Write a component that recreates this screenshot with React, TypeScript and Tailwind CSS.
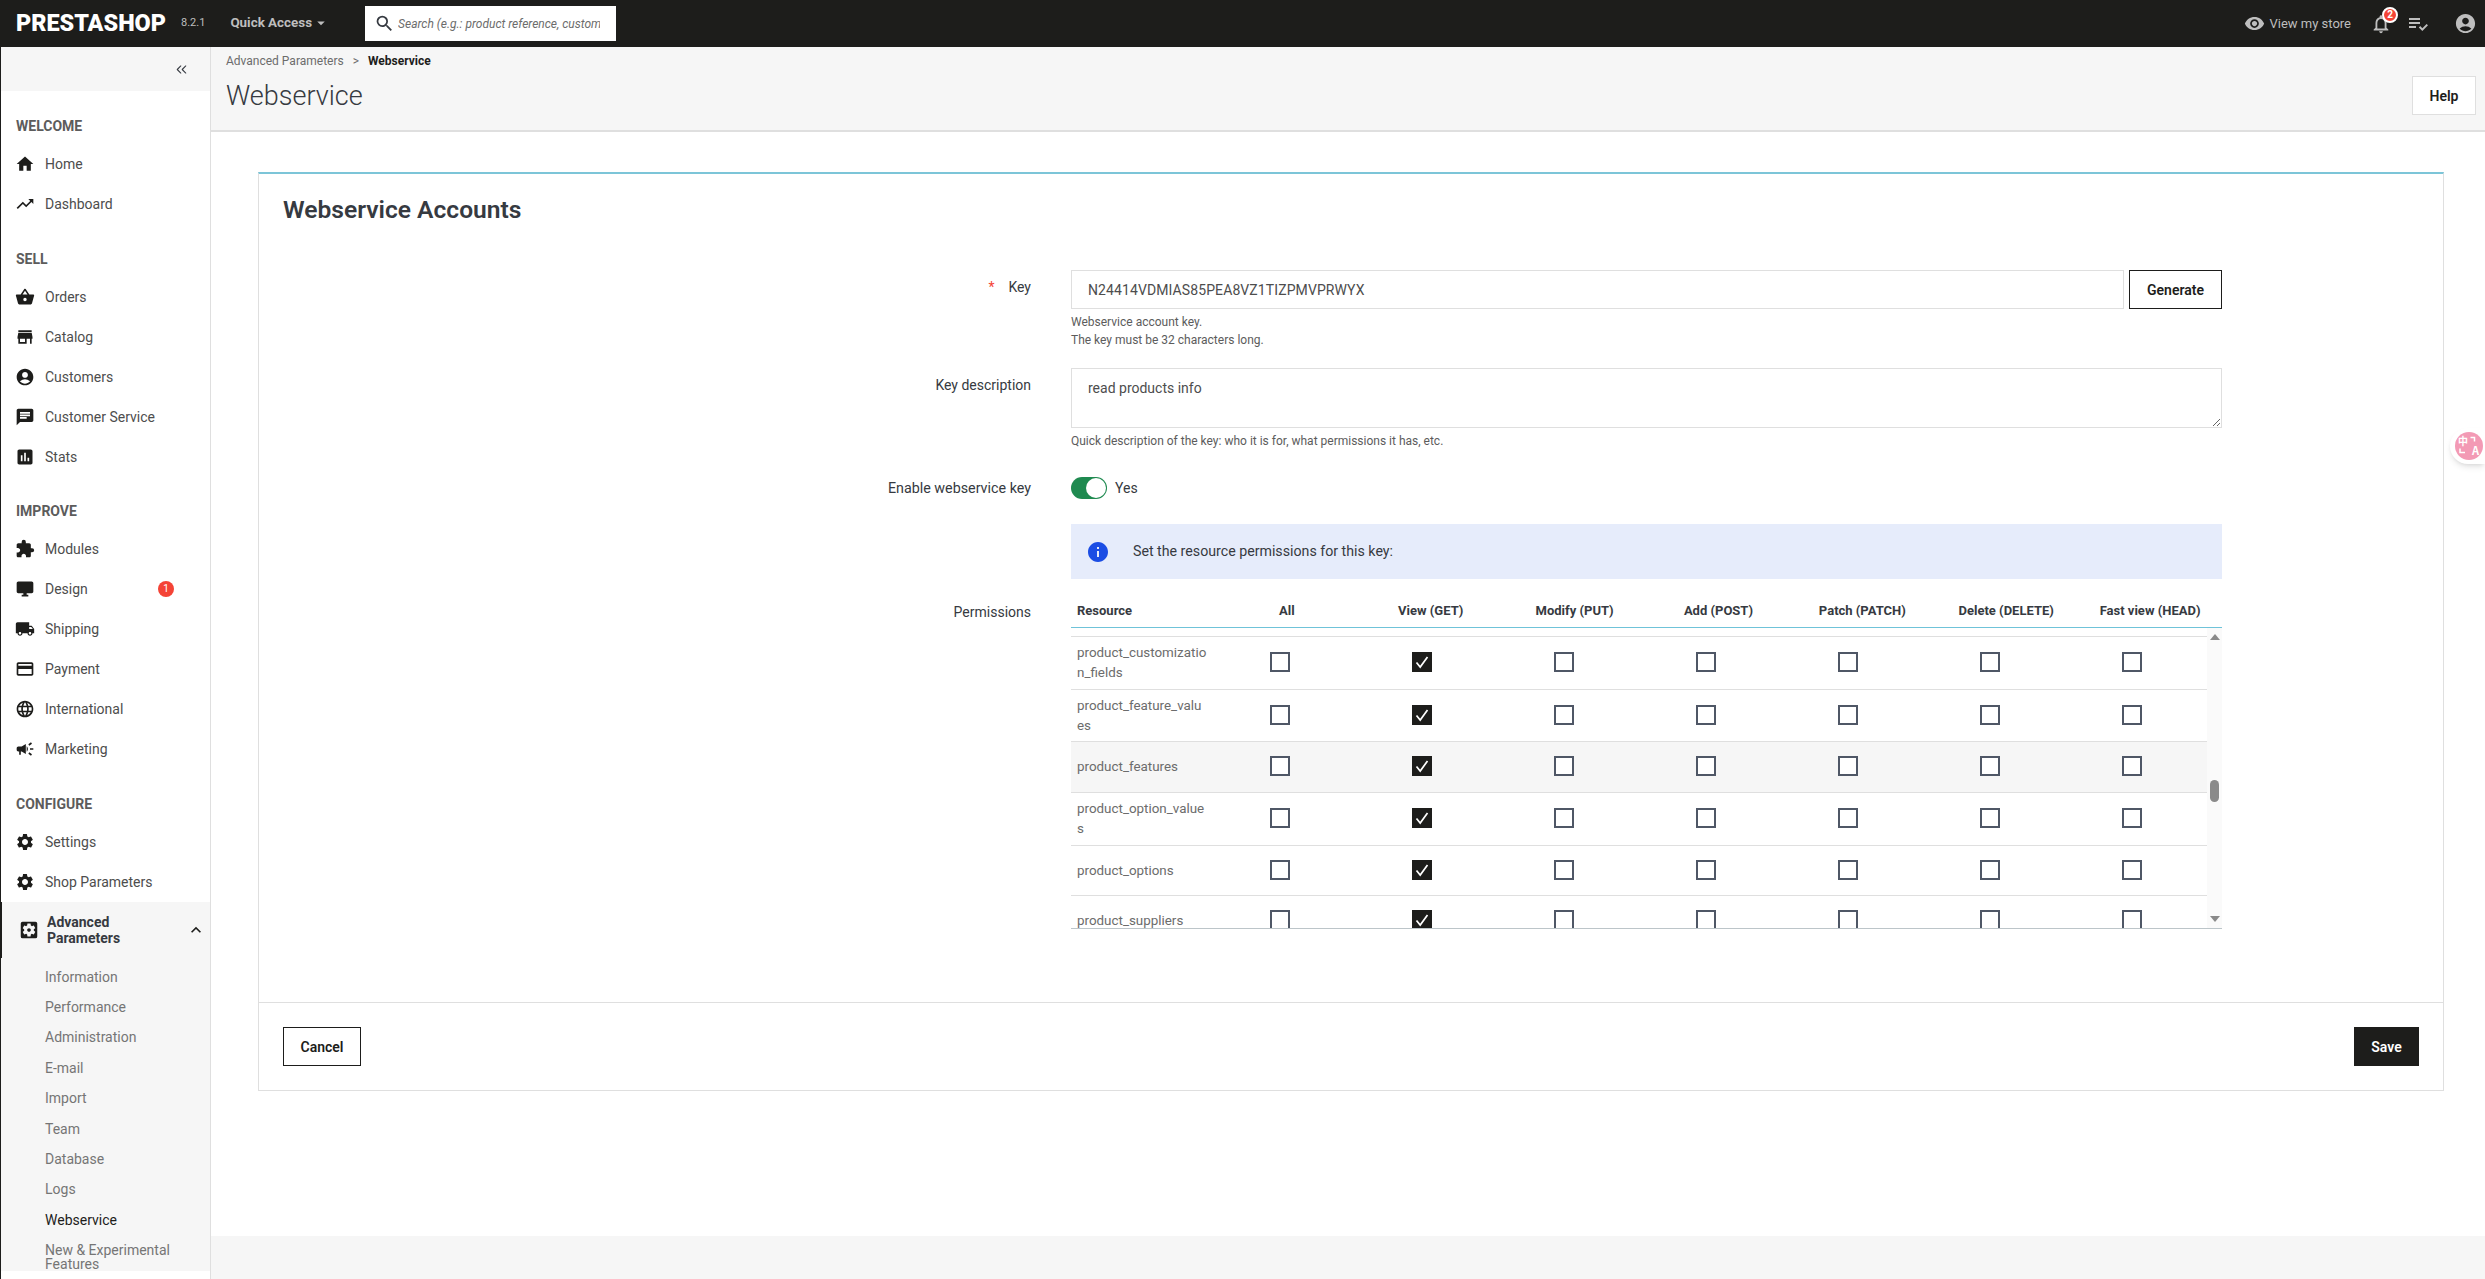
import {
  MdAccountCircle,
  MdArrowDropDown,
  MdAssessment,
  MdCampaign,
  MdChat,
  MdCreditCard,
  MdDesktopWindows,
  MdExtension,
  MdHome,
  MdInfo,
  MdKeyboardArrowUp,
  MdLanguage,
  MdLocalShipping,
  MdNotificationsNone,
  MdOutlinePlaylistAddCheck,
  MdSearch,
  MdSettings,
  MdSettingsApplications,
  MdShoppingBasket,
  MdStore,
  MdTrendingUp,
  MdVisibility,
} from "react-icons/md";
import { ChevronsLeft } from "lucide-react";
import type { IconType } from "react-icons";

type NavItem = { label: string; icon: IconType; badge?: string };

const navSections: { title: string; items: NavItem[] }[] = [
  {
    title: "Welcome",
    items: [
      { label: "Home", icon: MdHome },
      { label: "Dashboard", icon: MdTrendingUp },
    ],
  },
  {
    title: "Sell",
    items: [
      { label: "Orders", icon: MdShoppingBasket },
      { label: "Catalog", icon: MdStore },
      { label: "Customers", icon: MdAccountCircle },
      { label: "Customer Service", icon: MdChat },
      { label: "Stats", icon: MdAssessment },
    ],
  },
  {
    title: "Improve",
    items: [
      { label: "Modules", icon: MdExtension },
      { label: "Design", icon: MdDesktopWindows, badge: "1" },
      { label: "Shipping", icon: MdLocalShipping },
      { label: "Payment", icon: MdCreditCard },
      { label: "International", icon: MdLanguage },
      { label: "Marketing", icon: MdCampaign },
    ],
  },
  {
    title: "Configure",
    items: [
      { label: "Settings", icon: MdSettings },
      { label: "Shop Parameters", icon: MdSettings },
    ],
  },
];

const subLinks = [
  "Information",
  "Performance",
  "Administration",
  "E-mail",
  "Import",
  "Team",
  "Database",
  "Logs",
];

const columns = [
  "All",
  "View (GET)",
  "Modify (PUT)",
  "Add (POST)",
  "Patch (PATCH)",
  "Delete (DELETE)",
  "Fast view (HEAD)",
];

const resources = [
  { name: "product_customizatio\nn_fields", row: "h-[53px]" },
  { name: "product_feature_valu\nes", row: "h-[52px]" },
  { name: "product_features", row: "h-[51px] bg-[#f6f6f6]" },
  { name: "product_option_value\ns", row: "h-[53px]" },
  { name: "product_options", row: "h-[50px]" },
  { name: "product_suppliers", row: "h-[50px]" },
];

function Checkbox({ checked }: { checked?: boolean }) {
  if (checked) {
    return (
      <span className="flex h-5 w-5 items-center justify-center bg-[#1d1d1b]">
        <svg viewBox="0 0 20 20" className="h-5 w-5" fill="none" stroke="#fff" strokeWidth="1.7">
          <path d="M4.5 10.5 8.2 15 15.5 5" />
        </svg>
      </span>
    );
  }
  return <span className="block h-5 w-5 border-2 border-[#4f5766] bg-white" />;
}

function Sidebar() {
  return (
    <aside className="w-[211px] shrink-0 overflow-hidden border-r border-r-[#dfdfdf] border-l border-l-[#1d1d1b] bg-white text-sm text-[#4d4d4d]">
      <div className="flex h-[44px] items-center justify-end bg-[#f6f6f6] pr-[20px] text-[#363a41]">
        <ChevronsLeft size={17} strokeWidth={1.5} />
      </div>
      <nav>
        {navSections.map((section) => (
          <div key={section.title} className="pt-[24.75px]">
            <div className="mb-2 h-5 pl-[15px] font-bold uppercase leading-5 text-[#5c5c5c]">
              {section.title}
            </div>
            {section.items.map((item) => (
              <a key={item.label} className="flex h-10 items-center pl-[14px]">
                <item.icon className="mr-[10px] shrink-0 text-[20px] text-[#1d1d1b]" />
                <span>{item.label}</span>
                {item.badge && (
                  <span className="ml-auto mr-[36px] flex h-4 w-4 items-center justify-center rounded-full bg-[#f44336] text-[10px] text-white">
                    {item.badge}
                  </span>
                )}
              </a>
            ))}
          </div>
        ))}
      </nav>
      <div className="-ml-px bg-[#f6f6f6]">
        <div className="flex h-[56px] items-center border-l-2 border-l-[#1d1d1b] pl-[16px] pr-[4px]">
          <MdSettingsApplications className="mr-[7px] shrink-0 text-[22px] text-[#1d1d1b]" />
          <span className="flex-1 font-bold leading-4 text-[#363a41]">
            Advanced
            <br />
            Parameters
          </span>
          <MdKeyboardArrowUp className="text-[20px] text-[#1d1d1b]" />
        </div>
        <div className="pt-[3.5px] pl-[45px] text-[#757575]">
          {subLinks.map((link) => (
            <div key={link} className="flex h-[30.4px] items-center">
              {link}
            </div>
          ))}
          <div className="flex h-[30.4px] items-center text-[#1d1d1b]">Webservice</div>
          <div className="pt-[8px] leading-[14px]">
            New &amp; Experimental
            <br />
            Features
          </div>
        </div>
      </div>
    </aside>
  );
}

function TopBar() {
  return (
    <header className="flex h-[47px] shrink-0 items-center bg-[#1d1d1b] text-[#bebebe]">
      <span className="ml-4 text-[23.4px] font-black leading-none text-white">PRESTASHOP</span>
      <span className="ml-[15px] text-[11px]">8.2.1</span>
      <span className="ml-[25px] flex items-center text-[13.4px] font-bold">
        Quick Access
        <MdArrowDropDown className="text-[18px]" />
      </span>
      <div className="ml-[35px] flex h-[35px] w-[251px] items-center bg-white pl-[9px]">
        <MdSearch className="mr-[3px] shrink-0 text-[21px] text-[#363a41]" />
        <input
          readOnly
          placeholder="Search (e.g.: product reference, customer name…)"
          className="w-[202px] bg-transparent text-xs italic outline-none placeholder:text-[#6c6c6c]"
        />
      </div>
      <div className="ml-auto flex items-center">
        <MdVisibility className="mr-[4px] text-[21px]" />
        <span className="text-[13px]">View my store</span>
        <span className="relative ml-[19px] flex">
          <MdNotificationsNone className="text-[22px]" />
          <span className="absolute -right-[6px] -top-[6px] flex h-[16px] w-[16px] items-center justify-center rounded-full border-2 border-white bg-[#f44336] text-[10px] font-bold text-white">
            2
          </span>
        </span>
        <MdOutlinePlaylistAddCheck className="ml-[14px] text-[24px]" />
        <MdAccountCircle className="ml-[24px] mr-[8px] text-[23px]" />
      </div>
    </header>
  );
}

function PermissionsTable() {
  return (
    <div className="w-[1151px] text-sm">
      <div className="grid h-[33px] grid-cols-8 items-center border-b-[1.5px] border-b-[#6fc3d9] text-center text-[13px] font-bold text-[#363a41]">
        <div className="pl-[6px] text-left">Resource</div>
        {columns.map((col) => (
          <div key={col}>{col}</div>
        ))}
      </div>
      <div className="flex h-[301px] border-b border-b-[#bcc5c9]">
        <div className="h-full flex-1 overflow-hidden pt-2">
          {resources.map((res) => (
            <div
              key={res.name}
              className={`grid grid-cols-8 items-center border-t border-t-[#dfdfdf] text-[#6c6c6c] ${res.row}`}
            >
              <div className="whitespace-pre-line pl-[6px] text-[13.4px] leading-5">{res.name}</div>
              {columns.map((col, i) => (
                <div key={col} className="mb-[2px] flex justify-center pr-2">
                  <Checkbox checked={i === 1} />
                </div>
              ))}
            </div>
          ))}
        </div>
        <div className="relative flex w-[15px] flex-col items-center justify-between bg-[#fafafa] py-[6px] text-[#8a8a8a]">
          <svg viewBox="0 0 10 6" className="h-[6px] w-[10px]" fill="currentColor">
            <path d="M5 0 10 6H0z" />
          </svg>
          <svg viewBox="0 0 10 6" className="h-[6px] w-[10px]" fill="currentColor">
            <path d="M0 0H10L5 6z" />
          </svg>
          <span className="absolute left-[3px] top-[152px] h-[22px] w-[9px] rounded-full bg-[#8a8a8a]" />
        </div>
      </div>
    </div>
  );
}

function AccountsCard() {
  return (
    <section className="border border-[#dfdfdf] border-t-2 border-t-[#7cc5d8] bg-white text-sm text-[#363a41]">
      <div className="pb-[73px] pt-[20px]">
        <h3 className="pl-[24px] text-[24.6px] font-semibold leading-8 text-[#363a41]">Webservice Accounts</h3>

        <div className="mt-[44px] flex gap-[40px]">
          <label className="w-[772px] pt-[7px] text-right leading-5">
            <span className="mr-[14px] text-[#f44336]">*</span>Key
          </label>
          <div className="w-[1151px]">
            <div className="flex gap-[5px]">
              <input
                readOnly
                defaultValue="N24414VDMIAS85PEA8VZ1TIZPMVPRWYX"
                className="h-[39px] flex-1 border border-[#dfdfdf] px-4 text-sm tracking-[0.1px] text-[#4d4d4d] outline-none"
              />
              <button className="h-[39px] w-[93px] border-[1.5px] border-[#1d1d1b] text-sm font-semibold text-[#1d1d1b]">
                Generate
              </button>
            </div>
            <p className="mt-1 text-xs leading-[18px] text-[#5c5c5c]">
              Webservice account key.
              <br />
              The key must be 32 characters long.
            </p>
          </div>
        </div>

        <div className="mt-[19px] flex gap-[40px]">
          <label className="w-[772px] pt-[7px] text-right leading-5">Key description</label>
          <div className="w-[1151px]">
            <textarea
              readOnly
              defaultValue="read products info"
              className="block h-[60px] w-full border border-[#dfdfdf] px-4 py-[9px] text-sm leading-5 text-[#4d4d4d] outline-none"
            />
            <p className="mt-1 text-xs leading-[18px] text-[#5c5c5c]">
              Quick description of the key: who it is for, what permissions it has, etc.
            </p>
          </div>
        </div>

        <div className="mt-[27px] flex gap-[40px]">
          <label className="flex h-[22px] w-[772px] items-center justify-end text-[14.3px]">Enable webservice key</label>
          <div className="flex w-[1151px] items-center">
            <span className="flex h-[22px] w-[36px] items-center justify-end rounded-full bg-[#1f8a50] pr-[1px]">
              <span className="h-[20px] w-[20px] rounded-full bg-white" />
            </span>
            <span className="ml-2">Yes</span>
          </div>
        </div>

        <div className="mt-[25px] flex gap-[40px]">
          <div className="w-[772px]" />
          <div className="flex h-[55px] w-[1151px] items-center bg-[#e6ecfb] pl-[15px]">
            <MdInfo className="text-[24px] text-[#1b4de4]" />
            <span className="ml-[23px] text-[14.2px]">Set the resource permissions for this key:</span>
          </div>
        </div>

        <div className="mt-[16px] flex gap-[40px]">
          <label className="w-[772px] pt-[7px] text-right leading-5">Permissions</label>
          <PermissionsTable />
        </div>
      </div>

      <div className="flex items-center justify-between border-t border-t-[#dfdfdf] px-[24px] py-[24px]">
        <button className="h-[39px] w-[78px] border-[1.5px] border-[#1d1d1b] text-sm font-semibold text-[#1d1d1b]">
          Cancel
        </button>
        <button className="h-[39px] w-[65px] bg-[#1d1d1b] text-sm font-semibold text-white">Save</button>
      </div>
    </section>
  );
}

export default function App() {
  return (
    <div className="relative flex h-[1279px] w-full flex-col overflow-hidden bg-white font-['Roboto',sans-serif]">
      <TopBar />
      <div className="flex min-h-0 flex-1">
        <Sidebar />
        <main className="flex min-w-0 flex-1 flex-col">
          <div className="relative h-[85px] shrink-0 border-b-2 border-b-[#dfdfdf] bg-[#f6f6f6] pl-[15px]">
            <div className="flex items-center pt-[7px] text-xs leading-[14px] text-[#6c6c6c]">
              Advanced Parameters
              <span className="mx-[9px]">&gt;</span>
              <span className="font-bold text-[#1d1d1b]">Webservice</span>
            </div>
            <h1 className="mt-[10px] text-[27px] font-light leading-9 text-[#363a41]">Webservice</h1>
            <button className="absolute right-[9px] top-[29px] h-[39px] w-[64px] border border-[#dfdfdf] bg-white text-sm font-semibold text-[#1d1d1b]">
              Help
            </button>
          </div>
          <div className="flex-1 pl-[47px] pr-[41px] pt-[40px]">
            <AccountsCard />
          </div>
          <div className="h-[43px] shrink-0 bg-[#f6f6f6]" />
        </main>
      </div>
      <div className="absolute right-0 top-[428px] flex h-[36px] w-[35px] items-center rounded-l-full bg-white pl-[5px] shadow-md">
        <span className="relative block h-7 w-7 rounded-full bg-[#f39ab5] font-['Noto_Sans_CJK_SC',sans-serif] font-bold text-white">
          <span className="absolute left-[3px] top-[4px] text-[10px] leading-[10px]">中</span>
          <span className="absolute bottom-[4px] right-[4px] text-[11px] leading-[11px]">A</span>
          <svg viewBox="0 0 28 28" className="absolute inset-0 h-7 w-7" fill="none" stroke="#fff" strokeWidth="1.5">
            <path d="M15.5 5.5h4v4" />
            <path d="M5 16.5v4h5" />
          </svg>
        </span>
      </div>
    </div>
  );
}
